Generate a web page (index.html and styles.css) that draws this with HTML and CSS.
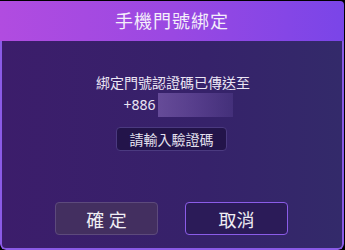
FILE: index.html
```html
<!DOCTYPE html>
<html lang="zh-Hant">
<head>
<meta charset="utf-8">
<link rel="stylesheet" href="styles.css">
</head>
<body>
<div class="dialog">
  <div class="header">手機門號綁定</div>
  <div class="body">
    <div class="msg">綁定門號認證碼已傳送至</div>
    <div class="phone"><span class="code">+886</span><span class="masked"></span></div>
    <div class="input">請輸入驗證碼</div>
    <div class="actions">
      <div class="btn confirm">確 定</div>
      <div class="btn cancel">取消</div>
    </div>
  </div>
</div>
</body>
</html>
```
FILE: styles.css
```css
html, body {
  margin: 0;
  padding: 0;
  background: #000;
}
body {
  width: 345px;
  height: 250px;
  overflow: hidden;
  font-family: "Noto Sans", "Noto Sans CJK TC", sans-serif;
}
.dialog {
  margin-top: 1px;
  width: 344px;
  height: 249px;
  border-radius: 0 4px 6px 6px;
  overflow: hidden;
  display: flex;
  flex-direction: column;
}
.header {
  height: 40px;
  flex: none;
  box-sizing: border-box;
  padding-bottom: 3px;
  display: flex;
  align-items: center;
  justify-content: center;
  background: linear-gradient(90deg, #b14ce0 0%, #9a48e2 50%, #7a45e8 100%);
  color: #f4eefa;
  font-size: 18px;
  letter-spacing: 1px;
}
.body {
  flex: 1;
  box-sizing: border-box;
  border: 2px solid #8a5ae6;
  border-top: none;
  border-radius: 0 0 6px 6px;
  background: linear-gradient(90deg, #3c1d6b 0%, #36226a 60%, #332a6a 100%);
  padding-top: 32px;
  display: flex;
  flex-direction: column;
  align-items: center;
  color: #ece6f4;
}
.msg {
  font-size: 14px;
  line-height: 20px;
  height: 20px;
  padding-left: 2px;
}
.phone {
  display: flex;
  align-items: center;
  height: 24px;
  font-size: 14px;
  padding-left: 12px;
}
.code {
  line-height: 20px;
  margin-right: 2px;
}
.masked {
  width: 75px;
  height: 24px;
  background: linear-gradient(90deg, rgba(140,110,190,0.55) 0%, rgba(125,95,180,0.45) 50%, rgba(110,85,170,0.25) 100%);
}
.input {
  margin-top: 10px;
  width: 111px;
  height: 24px;
  box-sizing: border-box;
  border: 1px solid #4b3a80;
  border-radius: 4px;
  background: #23144a;
  display: flex;
  align-items: center;
  justify-content: center;
  font-size: 14px;
  color: #e4e0ee;
  margin-right: 1px;
}
.actions {
  margin-top: 51px;
  display: flex;
  gap: 27px;
  margin-right: 1px;
}
.btn {
  width: 103px;
  height: 33px;
  box-sizing: border-box;
  border-radius: 4px;
  display: flex;
  align-items: center;
  justify-content: center;
  font-size: 18px;
  color: #f0eef4;
}
.confirm {
  background: #432f60;
  border: 1px solid #5d4a7c;
}
.cancel {
  background: #2b1b58;
  border: 1px solid #8b5ce8;
}
```
